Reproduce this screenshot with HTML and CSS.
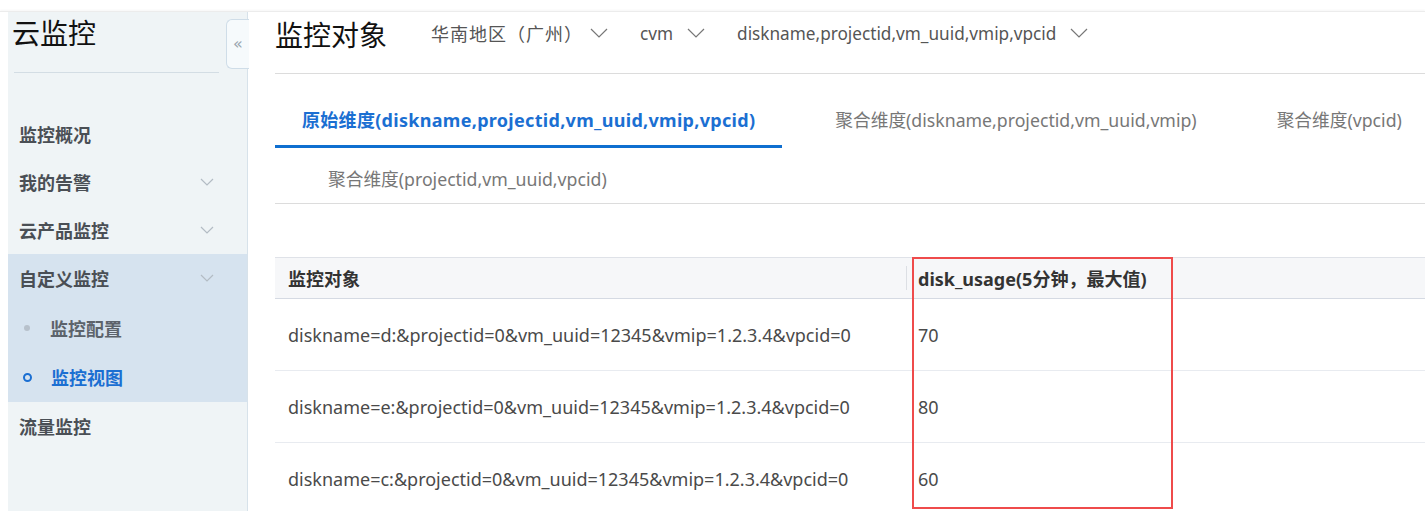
FILE: index.html
```html
<!DOCTYPE html>
<html lang="zh-CN">
<head>
<meta charset="utf-8">
<title>云监控 - 监控对象</title>
<link rel="stylesheet" href="styles.css">
</head>
<body>
<div class="app">
  <aside class="sidebar">
    <div class="brand">云监控</div>
    <button class="collapse" type="button" aria-label="收起">&laquo;</button>
    <nav class="menu">
      <div class="menu-item">监控概况</div>
      <div class="menu-item">
        <span>我的告警</span>
        <svg class="chev" width="14" height="8" viewBox="0 0 14 8"><polyline points="1,1 7,7 13,1"/></svg>
      </div>
      <div class="menu-item">
        <span>云产品监控</span>
        <svg class="chev" width="14" height="8" viewBox="0 0 14 8"><polyline points="1,1 7,7 13,1"/></svg>
      </div>
      <div class="menu-group">
        <div class="menu-item">
          <span>自定义监控</span>
          <svg class="chev" width="14" height="8" viewBox="0 0 14 8"><polyline points="1,1 7,7 13,1"/></svg>
        </div>
        <div class="sub-item"><span class="dot"></span>监控配置</div>
        <div class="sub-item active"><span class="ring"></span>监控视图</div>
      </div>
      <div class="menu-item">流量监控</div>
    </nav>
  </aside>

  <main class="content">
    <header class="page-head">
      <h1 class="page-title">监控对象</h1>
      <div class="selectors">
        <div class="select"><span class="region">华南地区（广州）</span><svg class="caret" width="18" height="10" viewBox="0 0 18 10"><polyline points="1,1 9,9 17,1"/></svg></div>
        <div class="select">cvm<svg class="caret" width="18" height="10" viewBox="0 0 18 10"><polyline points="1,1 9,9 17,1"/></svg></div>
        <div class="select">diskname,projectid,vm_uuid,vmip,vpcid<svg class="caret" width="18" height="10" viewBox="0 0 18 10"><polyline points="1,1 9,9 17,1"/></svg></div>
      </div>
    </header>

    <div class="tabs">
      <div class="tab active">原始维度(diskname,projectid,vm_uuid,vmip,vpcid)</div>
      <div class="tab">聚合维度(diskname,projectid,vm_uuid,vmip)</div>
      <div class="tab">聚合维度(vpcid)</div>
      <div class="tab">聚合维度(projectid,vm_uuid,vpcid)</div>
    </div>

    <div class="table-wrap">
      <table class="data-table">
        <thead>
          <tr>
            <th class="col-object">监控对象</th>
            <th class="col-metric"><span class="sep"></span>disk_usage(5分钟，最大值)</th>
            <th></th>
          </tr>
        </thead>
        <tbody>
          <tr><td>diskname=d:&amp;projectid=0&amp;vm_uuid=12345&amp;vmip=1.2.3.4&amp;vpcid=0</td><td>70</td><td></td></tr>
          <tr><td>diskname=e:&amp;projectid=0&amp;vm_uuid=12345&amp;vmip=1.2.3.4&amp;vpcid=0</td><td>80</td><td></td></tr>
          <tr><td>diskname=c:&amp;projectid=0&amp;vm_uuid=12345&amp;vmip=1.2.3.4&amp;vpcid=0</td><td>60</td><td></td></tr>
        </tbody>
      </table>
      <div class="highlight"></div>
    </div>
  </main>
</div>
</body>
</html>
```

FILE: styles.css
```css
* { box-sizing: border-box; }

html, body {
  margin: 0;
  height: 100%;
  background: #fff;
  overflow: hidden;
}

body {
  font-family: "Noto Sans", "Noto Sans CJK SC", sans-serif;
  color: #444;
}

.app {
  display: flex;
  height: 100%;
  margin-top: 11px;
  padding-left: 8px;
  border-top: 1px solid #ececec;
  box-shadow: 0 -1px 2px rgba(0, 0, 0, 0.04);
}

/* ---------- sidebar ---------- */
.sidebar {
  position: relative;
  flex: none;
  width: 240px;
  background: #eff4f6;
  border-right: 1px solid #d7e2ea;
}

.brand {
  margin-left: 6px;
  width: 205px;
  height: 61px;
  padding-top: 2px;
  font-family: "Noto Sans CJK SC", sans-serif;
  font-size: 28px;
  line-height: 36px;
  color: #111;
  text-indent: -2px;
  border-bottom: 1px solid #d3dde4;
}

.collapse {
  position: absolute;
  top: 7px;
  left: 218px;
  width: 23px;
  height: 50px;
  padding: 0;
  background: #f6fafc;
  border: 1px solid #cfdde8;
  border-right: none;
  border-radius: 6px 0 0 6px;
  color: #9aa6b0;
  font-family: "DejaVu Sans", sans-serif;
  font-size: 16px;
  line-height: 46px;
  text-align: center;
}

.menu {
  margin-top: 37px;
}

.menu-item {
  display: flex;
  align-items: center;
  justify-content: space-between;
  height: 48px;
  padding: 0 33px 0 11px;
  font-family: "Noto Sans CJK SC", sans-serif;
  font-size: 18px;
  font-weight: 700;
  color: #4a4f55;
}

.chev polyline {
  fill: none;
  stroke: #b3bcc4;
  stroke-width: 1.2;
}

.menu-group {
  background: #d6e3ef;
  padding-bottom: 2px;
}

.sub-item {
  display: flex;
  align-items: center;
  height: 49px;
  padding-top: 3px;
  padding-left: 16px;
  font-family: "Noto Sans CJK SC", sans-serif;
  font-size: 18px;
  font-weight: 700;
  color: #5c636b;
}

.sub-item .dot {
  width: 6px;
  height: 6px;
  margin-right: 20px;
  border-radius: 50%;
  background: #b7c1cb;
}

.sub-item .ring {
  width: 9px;
  height: 9px;
  margin: 0 19px 0 -1px;
  border-radius: 50%;
  border: 2px solid #1b6fd2;
}

.sub-item.active {
  color: #1b6fd2;
}

/* ---------- main content ---------- */
.content {
  flex: none;
  width: 1200px;
  padding-left: 27px;
}

.page-head {
  display: flex;
  align-items: flex-start;
  height: 62px;
  padding-top: 2px;
  border-bottom: 1px solid #dcdcdc;
}

.page-title {
  margin: 0 42px 0 0;
  font-family: "Noto Sans CJK SC", sans-serif;
  font-size: 28px;
  line-height: 40px;
  font-weight: 400;
  color: #111;
}

.selectors {
  display: flex;
  align-items: center;
  gap: 32px;
  height: 38px;
}

.select {
  display: flex;
  align-items: center;
  gap: 14px;
  font-size: 17.2px;
  color: #555;
}

.select .region {
  margin-left: 2px;
  margin-right: -7px;
  font-size: 18px;
  letter-spacing: 1px;
}

.caret polyline {
  fill: none;
  stroke: #777;
  stroke-width: 1.2;
}

/* tabs */
.tabs {
  display: flex;
  flex-wrap: wrap;
  margin-top: 16px;
  border-bottom: 1px solid #dcdcdc;
}

.tab {
  height: 52px;
  margin-top: 6px;
  margin-left: 26px;
  padding: 0 27px;
  line-height: 49px;
  font-size: 17.7px;
  color: #777;
  border-bottom: 3px solid transparent;
  white-space: nowrap;
}

.tab:first-child {
  margin-left: 0;
}

.tab:nth-child(4) {
  margin-top: 7px;
  height: 48px;
}

.tab.active {
  color: #1b6fd2;
  font-size: 18px;
  font-weight: 700;
  letter-spacing: 0.3px;
  border-bottom-color: #0f6fd0;
}

/* table */
.table-wrap {
  position: relative;
  margin-top: 53px;
}

.data-table {
  width: 100%;
  border-collapse: collapse;
  font-size: 18px;
}

.data-table th {
  height: 41px;
  padding: 0 13px;
  background: #f6f7f9;
  border-top: 1px solid #dfe2e8;
  border-bottom: 1px solid #d5dae3;
  text-align: left;
  font-weight: 700;
  color: #333;
}

.data-table .col-object {
  width: 631px;
}

.data-table .col-metric {
  position: relative;
  width: 267px;
  padding-left: 12px;
}

.data-table .sep {
  position: absolute;
  left: 0;
  top: 8px;
  bottom: 8px;
  width: 1px;
  background: #dcdfe4;
}

.data-table td {
  height: 72px;
  padding: 0 13px;
  border-bottom: 1px solid #e8ebf0;
  color: #4a4a4a;
  white-space: nowrap;
}

.data-table td:nth-child(2) {
  padding-left: 12px;
}

.highlight {
  position: absolute;
  left: 637px;
  top: 0;
  width: 261px;
  height: 252px;
  border: 2px solid #ef4b4b;
  pointer-events: none;
}
```
